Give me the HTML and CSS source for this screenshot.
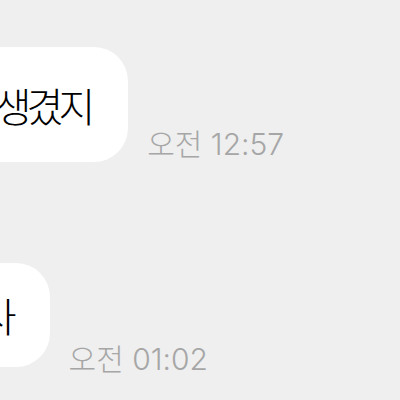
FILE: index.html
```html
<!DOCTYPE html>
<html lang="ko">
<head>
    <meta charset="UTF-8">
    <meta name="viewport" content="width=device-width, initial-scale=1.0">
    <title>Chat</title>
    <link rel="stylesheet" href="styles.css">
</head>
<body>
    <div class="chat">
        <div class="row first">
            <div class="bubble tall">잘생겼지</div>
            <span class="time">오전 12:57</span>
        </div>
        <div class="row second">
            <div class="bubble short">감사</div>
            <span class="time">오전 01:02</span>
        </div>
    </div>
</body>
</html>
```

FILE: styles.css
```css
body {
    margin: 0;
    background-color: #efefef;
    font-family: "Noto Sans CJK KR", "Noto Sans", sans-serif;
    overflow: hidden;
    height: 400px;
}

.chat {
    display: flex;
    flex-direction: column;
}

.row {
    display: flex;
    align-items: flex-end;
    gap: 19px;
}

.row.first {
    margin-top: 47px;
}

.row.second {
    margin-top: 101px;
}

.bubble {
    background-color: #fff;
    color: #000;
    border-radius: 34px;
    font-size: 40px;
    font-weight: 300;
    letter-spacing: -5px;
    white-space: nowrap;
    padding: 0 38px 0 40px;
    display: flex;
    align-items: center;
}

.bubble.tall {
    height: 115px;
    margin-left: -77px;
}

.bubble.short {
    height: 104px;
    margin-left: -92px;
}

.time {
    font-family: "Inter", "Noto Sans CJK KR", sans-serif;
    font-size: 30px;
    font-weight: 300;
    line-height: 30px;
    color: #a6a6a6;
    white-space: nowrap;
}

.first .time {
    margin-bottom: 3px;
}

.second .time {
    margin-bottom: -7px;
}
```
